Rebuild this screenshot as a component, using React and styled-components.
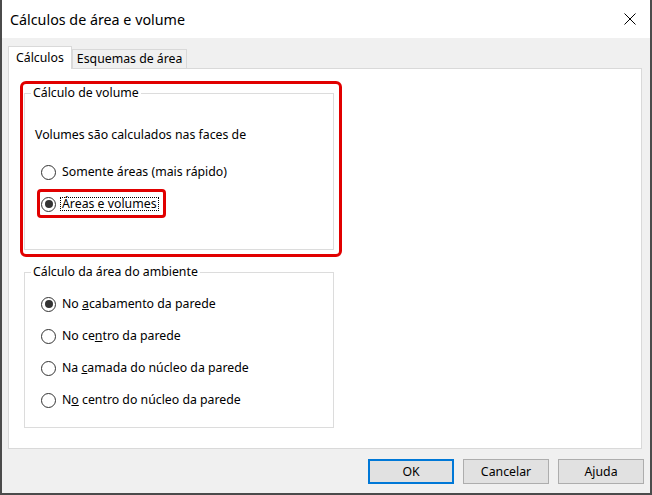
import React from "react";
import styled, { createGlobalStyle } from "styled-components";

const GlobalStyle = createGlobalStyle`
    html, body {
        margin: 0;
        padding: 0;
        background: #ffffff;
    }
    body {
        font-family: "Noto Sans", "Liberation Sans", sans-serif;
        font-size: 12.3px;
        color: #000000;
    }
`;

const volumeOptions = [
    { label: "Somente áreas (mais rápido)", checked: false },
    { label: "Áreas e volumes", checked: true, focused: true },
];

const areaOptions = [
    { before: "No ", key: "a", after: "cabamento da parede", checked: true },
    { before: "No ce", key: "n", after: "tro da parede" },
    { before: "Na ", key: "c", after: "amada do núcleo da parede" },
    { before: "N", key: "o", after: " centro do núcleo da parede" },
];

export default function App() {
    return (
        <>
            <GlobalStyle />
            <Window>
                <TitleBar>
                    <Title>Cálculos de área e volume</Title>
                    <CloseIcon width="12" height="12" viewBox="0 0 12 12">
                        <path d="M0.5 0.5 L11.5 11.5 M11.5 0.5 L0.5 11.5" stroke="#000" strokeWidth="1" />
                    </CloseIcon>
                </TitleBar>
                <Body>
                    <TabStrip>
                        <Tab $active>Cálculos</Tab>
                        <Tab>Esquemas de área</Tab>
                    </TabStrip>
                    <Panel>
                        <Group $top>
                            <Highlight $top={-13} $left={-5} $right={-9} $bottom={-8} $radius={6} />
                            <Legend>Cálculo de volume</Legend>
                            <Description>Volumes são calculados nas faces de</Description>
                            <RadioList $gapTop={19}>
                                {volumeOptions.map((o) => (
                                    <RadioRow key={o.label}>
                                        {o.focused && (
                                            <Highlight $top={-5} $left={-4} $right={-7} $bottom={-4} $radius={4} />
                                        )}
                                        <Radio $checked={o.checked} />
                                        <RadioLabel $focused={o.focused}>{o.label}</RadioLabel>
                                    </RadioRow>
                                ))}
                            </RadioList>
                        </Group>
                        <Group>
                            <Legend>Cálculo da área do ambiente</Legend>
                            <RadioList $gapTop={14}>
                                {areaOptions.map((o) => (
                                    <RadioRow key={o.after}>
                                        <Radio $checked={o.checked} />
                                        <RadioLabel>
                                            {o.before}
                                            <u>{o.key}</u>
                                            {o.after}
                                        </RadioLabel>
                                    </RadioRow>
                                ))}
                            </RadioList>
                        </Group>
                    </Panel>
                    <ButtonRow>
                        <Button $default>OK</Button>
                        <Button>Cancelar</Button>
                        <Button>Ajuda</Button>
                    </ButtonRow>
                </Body>
            </Window>
        </>
    );
}

const Window = styled.div`
    width: 652px;
    height: 495px;
    box-sizing: border-box;
    border: 2px solid #4b4b4b;
    border-top: none;
    background: #f0f0f0;
    display: flex;
    flex-direction: column;
`;
const TitleBar = styled.div`
    height: 38px;
    flex-shrink: 0;
    background: #ffffff;
    display: flex;
    align-items: center;
    justify-content: space-between;
    padding: 0 14px 0 8px;
`;
const Title = styled.div`
    font-size: 14.3px;
    line-height: 20px;
    margin-top: 1px;
`;
const CloseIcon = styled.svg`
    display: block;
`;
const Body = styled.div`
    flex: 1;
    padding: 8px 6px 0 6px;
    display: flex;
    flex-direction: column;
`;
const TabStrip = styled.div`
    height: 22px;
    display: flex;
    align-items: flex-end;
`;
const Tab = styled.div`
    box-sizing: border-box;
    height: ${(p) => (p.$active ? "23px" : "19px")};
    margin-bottom: ${(p) => (p.$active ? "-1px" : "0")};
    padding: ${(p) => (p.$active ? "3px 7px 0 7px" : "1px 4px 0 4px")};
    border: 1px solid #d9d9d9;
    border-bottom: none;
    background: ${(p) => (p.$active ? "#ffffff" : "#f0f0f0")};
    position: relative;
    z-index: ${(p) => (p.$active ? 1 : 0)};
    line-height: 16px;
    white-space: nowrap;
`;
const Panel = styled.div`
    box-sizing: border-box;
    width: 634px;
    height: 381px;
    border: 1px solid #d9d9d9;
    background: #ffffff;
    padding: 24px 0 0 15px;
`;
const Group = styled.div`
    position: relative;
    box-sizing: border-box;
    width: 310px;
    border: 1px solid #dcdcdc;
    padding: 0 0 ${(p) => (p.$top ? "35px" : "17px")} 10px;
    margin-bottom: 22px;
    display: flex;
    flex-direction: column;
    align-items: flex-start;
`;
const Highlight = styled.div`
    position: absolute;
    top: ${(p) => p.$top}px;
    left: ${(p) => p.$left}px;
    right: ${(p) => p.$right}px;
    bottom: ${(p) => p.$bottom}px;
    border: 3px solid #e10000;
    border-radius: ${(p) => p.$radius}px;
    pointer-events: none;
`;
const Legend = styled.div`
    margin: -9px 0 0 -4px;
    padding: 0 2px;
    background: #ffffff;
    line-height: 16px;
`;
const Description = styled.div`
    margin-top: 26px;
    line-height: 16px;
`;
const RadioList = styled.div`
    margin-top: ${(p) => p.$gapTop}px;
    margin-left: 6px;
    display: flex;
    flex-direction: column;
    align-items: flex-start;
    gap: 12px;
`;
const RadioRow = styled.div`
    position: relative;
    height: 20px;
    display: flex;
    align-items: center;
`;
const Radio = styled.span`
    box-sizing: border-box;
    flex-shrink: 0;
    width: 15px;
    height: 15px;
    border-radius: 50%;
    border: 1px solid #333333;
    background: #ffffff;
    display: flex;
    align-items: center;
    justify-content: center;
    margin-right: 4px;
    &::after {
        content: "";
        width: 8px;
        height: 8px;
        border-radius: 50%;
        background: #333333;
        display: ${(p) => (p.$checked ? "block" : "none")};
    }
`;
const RadioLabel = styled.span`
    line-height: 12px;
    padding: 0 1px;
    border: 1px dotted ${(p) => (p.$focused ? "#000000" : "transparent")};
    white-space: nowrap;
`;
const ButtonRow = styled.div`
    margin-top: 10px;
    display: flex;
    justify-content: flex-end;
    gap: 9px;
`;
const Button = styled.button`
    box-sizing: border-box;
    width: 86px;
    height: 25px;
    font-family: inherit;
    font-size: 12.3px;
    color: #000000;
    background: #e1e1e1;
    border: ${(p) => (p.$default ? "2px solid #0078d7" : "1px solid #adadad")};
    padding: 0;
`;
